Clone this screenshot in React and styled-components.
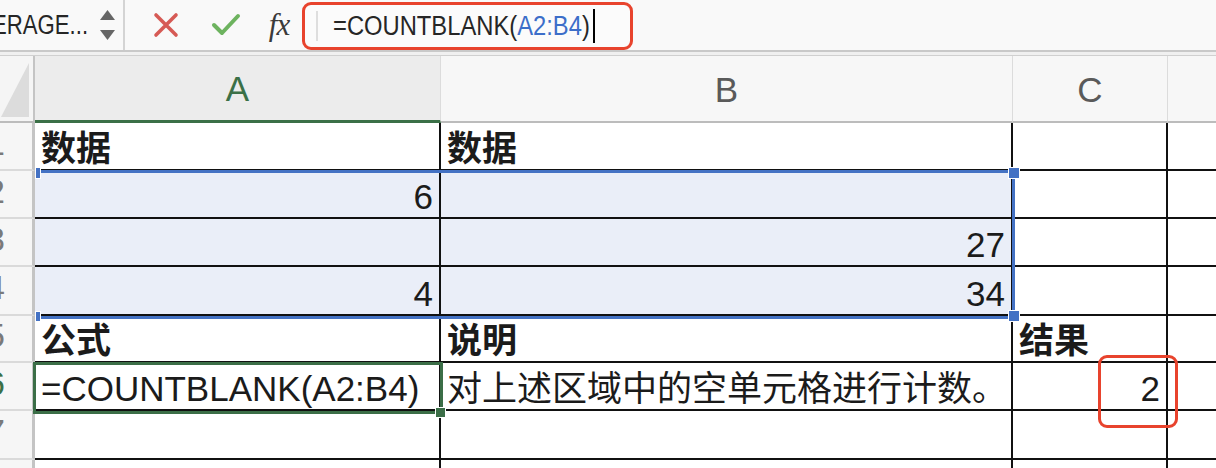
import React from "react";
import styled, { createGlobalStyle } from "styled-components";

const GlobalStyle = createGlobalStyle`
  html, body {
    margin: 0;
    padding: 0;
    background: #ffffff;
    overflow: hidden;
  }
  * { box-sizing: border-box; }
`;

const CELL_FONT = `"Liberation Sans", "Noto Sans CJK SC", sans-serif`;

const Page = styled.div`
  width: 1216px;
  height: 468px;
  display: flex;
  flex-direction: column;
  overflow: hidden;
  font-family: ${CELL_FONT};
`;

/* ---------- formula bar ---------- */

const Toolbar = styled.div`
  height: 52px;
  display: flex;
  align-items: stretch;
  background: #f9f9f9;
  border-bottom: 2px solid #c9c9c9;
  flex-shrink: 0;
`;

const NameBox = styled.div`
  width: 92px;
  display: flex;
  justify-content: flex-end;
  align-items: center;
  padding-right: 4px;
  overflow: hidden;
  white-space: nowrap;
`;

/* the bar uses a narrow face: squeeze a normal sans to the same width */
const Narrow = styled.span`
  display: inline-block;
  font-size: 27px;
  color: ${(p) => p.color || "#262626"};
  transform: scaleX(${(p) => p.squeeze});
  transform-origin: ${(p) => p.origin || "left"} center;
  white-space: nowrap;
`;

const Spinner = styled.div`
  width: 33px;
  display: flex;
  flex-direction: column;
  align-items: center;
  justify-content: center;
  gap: 10px;
  border-right: 2px solid #d4d4d4;
`;

const IconButton = styled.div`
  width: ${(p) => p.w}px;
  display: flex;
  align-items: center;
  justify-content: center;
`;

const Fx = styled.span`
  font-family: "Liberation Serif", serif;
  font-style: italic;
  font-size: 31px;
  color: #3a3a3a;
  letter-spacing: -1px;
`;

const FormulaBox = styled.div`
  width: 331px;
  height: 48px;
  margin-top: 2px;
  border: 3px solid #e8432d;
  border-radius: 9px;
  display: flex;
  align-items: center;
  padding-left: 11px;
  background: #fbfbfb;
  overflow: hidden;
`;

const BoxDivider = styled.div`
  width: 2px;
  height: 30px;
  background: #dedede;
  margin-right: 15px;
  flex-shrink: 0;
`;

const FormulaLine = styled.div`
  width: 260px;
  flex-shrink: 0;
`;

const Ref = styled.span`
  color: #3c6ec9;
`;

const Caret = styled.span`
  display: inline-block;
  width: 2px;
  height: 34px;
  background: #000;
  flex-shrink: 0;
`;

const Strip = styled.div`
  height: 4px;
  background: #f0f0f0;
  border-bottom: 1px solid #d0d0d0;
  flex-shrink: 0;
`;

/* ---------- sheet ---------- */

const Sheet = styled.div`
  position: relative;
  flex: 1;
  display: grid;
  grid-template-columns: 35px 406px 572px 155px 1fr;
  grid-template-rows: 67px 48px 48px 48px 49px 47px 48px 49px 1fr;
`;

const Corner = styled.div`
  background: #f5f5f5;
  border-right: 2px solid #c4c4c4;
  border-bottom: 2px solid #bcbcbc;
  display: flex;
  align-items: flex-end;
  justify-content: flex-end;
  padding: 0 4px 4px 0;
`;

const ColHead = styled.div`
  display: flex;
  align-items: center;
  justify-content: center;
  font-size: 35px;
  color: ${(p) => (p.active ? "#3b7047" : "#5a5a5a")};
  background: ${(p) => (p.active ? "#ececec" : "#f7f7f7")};
  border-right: ${(p) => (p.last ? "none" : "1px solid #dcdcdc")};
  border-bottom: ${(p) => (p.active ? "3px solid #3b7047" : "2px solid #bcbcbc")};
  padding-top: 2px;
`;

/* row numbers sit mostly outside the visible strip, only their right edge shows */
const RowHead = styled.div`
  display: flex;
  justify-content: flex-end;
  align-items: center;
  padding: 0 27px 6px 0;
  overflow: hidden;
  background: #f6f6f6;
  border-right: 3px solid #c4c4c4;
  border-bottom: 2px solid #dadada;
  font-size: 34px;
  color: ${(p) => (p.active ? "#3b7047" : "#7a7a7a")};
`;

const Cell = styled.div`
  display: flex;
  align-items: flex-end;
  justify-content: ${(p) => (p.right ? "flex-end" : "flex-start")};
  padding: 0 6px 0 6px;
  background: ${(p) => (p.sel ? "#eaeef8" : "#ffffff")};
  border-right: ${(p) => (p.last ? "none" : "2px solid #111")};
  border-bottom: 2px solid #111;
  font-size: 35px;
  line-height: 40px;
  font-weight: ${(p) => (p.bold ? 700 : 400)};
  color: #1b1b1b;
  white-space: nowrap;
`;

const Selection = styled.div`
  position: absolute;
  left: 36px;
  top: 114px;
  width: 979px;
  height: 149px;
  border-top: 3px solid #4472c4;
  border-bottom: 3px solid #4472c4;
  border-right: 3px solid #4472c4;
  pointer-events: none;
`;

const Handle = styled.div`
  position: absolute;
  left: ${(p) => p.x}px;
  top: ${(p) => p.y}px;
  width: ${(p) => p.w}px;
  height: ${(p) => p.h}px;
  background: ${(p) => p.color};
  outline: 1px solid #ffffff;
`;

const ActiveCell = styled.div`
  position: absolute;
  left: 33px;
  top: 306px;
  width: 410px;
  height: 52px;
  border: 3px solid #3b6e47;
  pointer-events: none;
`;

const Callout = styled.div`
  position: absolute;
  left: 1098px;
  top: 299px;
  width: 80px;
  height: 73px;
  border: 3px solid #e8432d;
  border-radius: 9px;
  pointer-events: none;
`;

const XIcon = () => (
  <svg width="26" height="26" viewBox="0 0 26 26">
    <path d="M3 3 L23 23 M23 3 L3 23" stroke="#d65a55" strokeWidth="3.6" strokeLinecap="round" />
  </svg>
);

const CheckIcon = () => (
  <svg width="30" height="24" viewBox="0 0 30 24">
    <path d="M3 12 L11 20 L27 3" stroke="#6db35f" strokeWidth="4" fill="none" strokeLinecap="round" strokeLinejoin="round" />
  </svg>
);

const Arrow = ({ up }) => (
  <svg width="15" height="10" viewBox="0 0 15 10">
    <path d={up ? "M7.5 0 L15 10 L0 10 Z" : "M0 0 L15 0 L7.5 10 Z"} fill="#666666" />
  </svg>
);

const CornerTriangle = () => (
  <svg width="28" height="54" viewBox="0 0 28 54">
    <path d="M28 0 L28 54 L0 54 Z" fill="#dcdcdc" />
  </svg>
);

const rows = [
  { n: 1, cells: [{ t: "数据", b: true }, { t: "数据", b: true }, {}, {}] },
  { n: 2, sel: true, cells: [{ t: "6", r: true }, {}, {}, {}] },
  { n: 3, sel: true, cells: [{}, { t: "27", r: true }, {}, {}] },
  { n: 4, sel: true, cells: [{ t: "4", r: true }, { t: "34", r: true }, {}, {}] },
  { n: 5, cells: [{ t: "公式", b: true }, { t: "说明", b: true }, { t: "结果", b: true }, {}] },
  {
    n: 6,
    active: true,
    cells: [{ t: "=COUNTBLANK(A2:B4)" }, { t: "对上述区域中的空单元格进行计数。" }, { t: "2", r: true }, {}],
  },
  { n: 7, cells: [{}, {}, {}, {}] },
  { n: 8, cells: [{}, {}, {}, {}] },
];

const cols = ["A", "B", "C", ""];

const App = () => (
  <Page>
    <GlobalStyle />
    <Toolbar>
      <NameBox>
        <Narrow squeeze={0.82} origin="right">AVERAGE...</Narrow>
      </NameBox>
      <Spinner>
        <Arrow up />
        <Arrow />
      </Spinner>
      <IconButton w={11} />
      <IconButton w={60}>
        <XIcon />
      </IconButton>
      <IconButton w={60}>
        <CheckIcon />
      </IconButton>
      <IconButton w={46}>
        <Fx>fx</Fx>
      </IconButton>
      <FormulaBox>
        <BoxDivider />
        <FormulaLine>
          <Narrow squeeze={0.88}>
            =COUNTBLANK(<Ref>A2:B4</Ref>)
          </Narrow>
        </FormulaLine>
        <Caret />
      </FormulaBox>
    </Toolbar>
    <Strip />
    <Sheet>
      <Corner>
        <CornerTriangle />
      </Corner>
      {cols.map((c, i) => (
        <ColHead key={i} active={c === "A"} last={i === cols.length - 1}>
          {c}
        </ColHead>
      ))}
      {rows.map((row) => (
        <React.Fragment key={row.n}>
          <RowHead active={row.active}>{row.n}</RowHead>
          {row.cells.map((c, i) => (
            <Cell
              key={i}
              bold={c.b}
              right={c.r}
              sel={row.sel && i < 2}
              last={i === row.cells.length - 1}
            >
              {c.t}
            </Cell>
          ))}
        </React.Fragment>
      ))}
      <Selection />
      <Handle x={36} y={112} w={4} h={10} color="#4472c4" />
      <Handle x={36} y={256} w={4} h={9} color="#4472c4" />
      <Handle x={1009} y={112} w={10} h={10} color="#4472c4" />
      <Handle x={1009} y={255} w={10} h={10} color="#4472c4" />
      <ActiveCell />
      <Handle x={436} y={352} w={9} h={9} color="#3b6e47" />
      <Callout />
    </Sheet>
  </Page>
);

export default App;
